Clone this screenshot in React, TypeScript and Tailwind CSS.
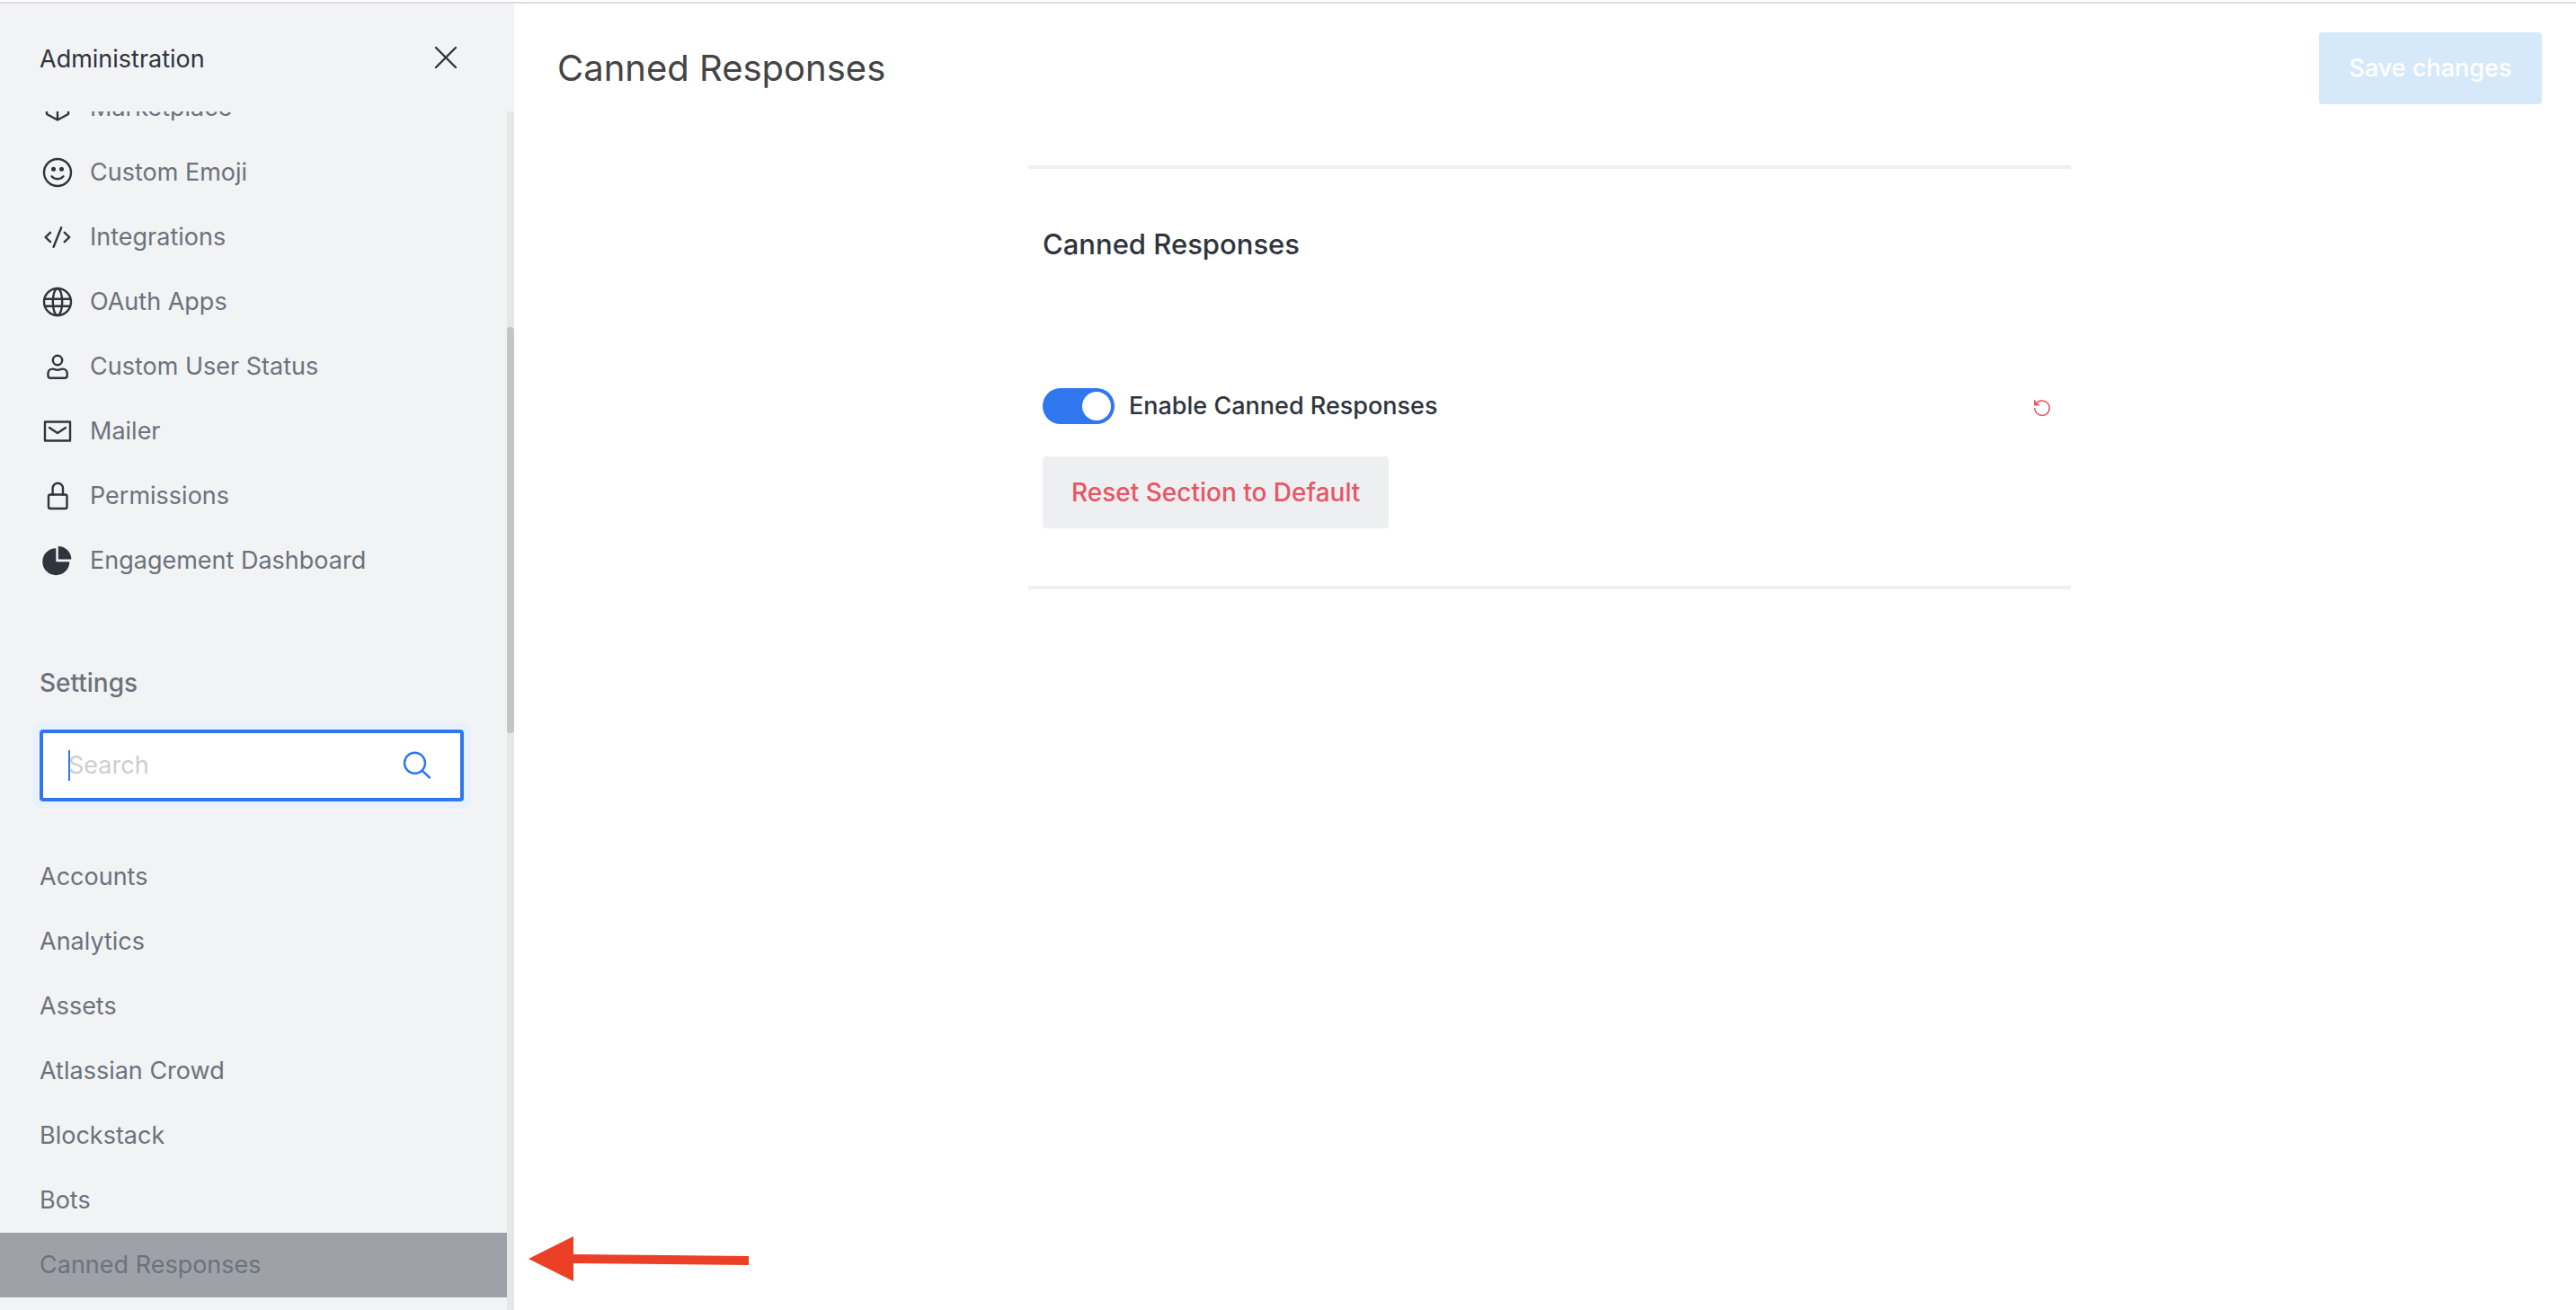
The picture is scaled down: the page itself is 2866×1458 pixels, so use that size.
import type { ReactNode } from "react";

const stroke = {
  fill: "none",
  stroke: "currentColor",
  strokeWidth: 2.4,
  strokeLinecap: "round" as const,
  strokeLinejoin: "round" as const,
};

function Icon({ children }: { children: ReactNode }) {
  return (
    <svg viewBox="0 0 40 40" className="size-10 shrink-0" aria-hidden="true" {...stroke}>
      {children}
    </svg>
  );
}

const adminItems: { label: string; icon: ReactNode }[] = [
  {
    label: "Marketplace",
    icon: <path d="M20 6l12 7v14l-12 6.500-12-6.500V13zM20 20v13M8 13l12 7 12-7" />,
  },
  {
    label: "Custom Emoji",
    icon: (
      <>
        <circle cx="20" cy="20" r="15" />
        <circle cx="15.500" cy="16.300" r="2.500" fill="currentColor" stroke="none" />
        <circle cx="24.500" cy="16.300" r="2.500" fill="currentColor" stroke="none" />
        <path d="M13.500 24.300c1.800 2 4 2.900 6.500 2.900s4.700-.9 6.500-2.900" />
      </>
    ),
  },
  {
    label: "Integrations",
    icon: <path d="M12 14.800L6.600 20l5.400 5.200M27.800 14.800L33.200 20l-5.400 5.200M24.200 9.300l-8.600 21.500" />,
  },
  {
    label: "OAuth Apps",
    icon: (
      <>
        <circle cx="20" cy="20" r="15" />
        <ellipse cx="20" cy="20" rx="5.200" ry="15" />
        <path d="M6 16.800h28M6 24.800h28" />
      </>
    ),
  },
  {
    label: "Custom User Status",
    icon: (
      <>
        <circle cx="20" cy="13" r="5.200" />
        <path d="M14.500 22.600c2 0 3.200 1.200 5.600 1.200s3.600-1.200 5.600-1.200c3 0 5 2.200 5 5V30c0 1.800-1 2.800-2.800 2.800H12.300c-1.800 0-2.800-1-2.800-2.800v-2.400c0-2.800 2-5 5-5z" />
      </>
    ),
  },
  {
    label: "Mailer",
    icon: (
      <>
        <rect x="6" y="9.500" width="28" height="21" />
        <path d="M11 16l9 6 9-6" />
      </>
    ),
  },
  {
    label: "Permissions",
    icon: (
      <>
        <rect x="10" y="18.500" width="20.500" height="15.500" rx="2" />
        <path d="M14.600 18.500v-7a5.700 5.700 0 0 1 11.400 0v7" />
      </>
    ),
  },
  {
    label: "Engagement Dashboard",
    icon: (
      <g fill="currentColor" stroke="none">
        <path d="M18.300 6.200v15h15A15 15 0 1 1 18.300 6.200z" />
        <path d="M20.800 4a14.500 14.500 0 0 1 14.500 14.500H20.800z" />
      </g>
    ),
  },
];

const settings = ["Accounts", "Analytics", "Assets", "Atlassian Crowd", "Blockstack", "Bots", "Canned Responses"];

function Sidebar() {
  return (
    <aside className="flex w-[572px] shrink-0 flex-col bg-[#f2f3f5]">
      <header className="flex h-[120px] shrink-0 items-center justify-between pt-1 pr-14 pl-11 text-[#2f343d]">
        <h2 className="leading-10">Administration</h2>
        <button type="button" aria-label="Close" className="size-10">
          <svg viewBox="0 0 40 40" className="size-10" aria-hidden="true" {...stroke}>
            <path d="M9 7l22 22M31 7L9 29" />
          </svg>
        </button>
      </header>
      <div className="flex min-h-0 flex-1">
        <div className="flex min-w-0 flex-1 flex-col justify-end overflow-hidden pb-[14px] text-[#6c727a]">
          <nav aria-label="Administration">
            {adminItems.map((item) => (
              <a key={item.label} href="#" className="flex h-[72px] items-center gap-4 pl-11">
                <span className="text-[#2f343d]">
                  <Icon>{item.icon}</Icon>
                </span>
                {item.label}
              </a>
            ))}
          </nav>
          <h3 id="settings-heading" className="mt-20 pl-11 text-[28px] leading-10 font-medium">
            Settings
          </h3>
          <div className="mt-8 mr-12 ml-11 flex h-20 shrink-0 items-center rounded-sm border-4 border-[#3076ef] bg-white px-7 ring-8 ring-[#e8f2ff]">
            <span className="-mr-[2px] h-[34px] w-[2px] bg-[#3076ef]" />
            <input
              type="text"
              aria-label="Search settings"
              placeholder="Search"
              className="h-10 min-w-0 flex-1 outline-none placeholder:text-[#cbced1]"
            />
            <svg viewBox="0 0 40 40" className="size-10 text-[#3076ef]" aria-hidden="true" {...stroke}>
              <circle cx="17.500" cy="17.300" r="11.500" />
              <path d="M26 26l8 7.500" />
            </svg>
          </div>
          <nav aria-labelledby="settings-heading" className="mt-12">
            {settings.map((name) => (
              <a
                key={name}
                href="#"
                aria-current={name === "Canned Responses" ? "page" : undefined}
                className="flex h-[72px] items-center pl-11 aria-[current=page]:bg-[#9ea2a8]"
              >
                {name}
              </a>
            ))}
          </nav>
        </div>
        <div className="w-2 shrink-0 bg-[#e6e8e8] pt-60">
          <div className="h-[452px] rounded-full bg-[#c4c6c6]" />
        </div>
      </div>
    </aside>
  );
}

export default function App() {
  return (
    <div className="flex h-screen overflow-hidden border-t-2 border-white bg-white font-['Inter',sans-serif] text-[27px]">
      <div className="relative flex min-w-0 flex-1 border-t-2 border-[#dcdce2]">
        <Sidebar />
        <main className="flex min-w-0 flex-1 flex-col pr-[38px] pl-12 text-[#2f343d]">
          <header className="flex items-center justify-between pt-8">
            <h1 className="text-[40px] leading-[64px] text-[#444]">Canned Responses</h1>
            <button type="button" disabled className="h-20 min-w-[248px] rounded-sm bg-[#d6e9fb] px-8 font-medium text-white">
              Save changes
            </button>
          </header>
          <section className="mx-auto mt-[68px] w-full max-w-[1160px] border-y-4 border-[#eeeff1] px-4 pb-16">
            <h2 className="pt-16 text-[31px] leading-10 font-medium">Canned Responses</h2>
            <div className="mt-[140px] flex items-center justify-between pr-[6px]">
              <label className="flex items-center gap-4 leading-10 font-medium">
                <span className="flex h-10 w-20 items-center rounded-full bg-[#3076ef] px-1 has-[:checked]:justify-end">
                  <input type="checkbox" role="switch" defaultChecked className="size-8 appearance-none rounded-full bg-white" />
                </span>
                Enable Canned Responses
              </label>
              <button type="button" aria-label="Reset setting" className="pt-1 text-[#e85566]">
                <svg viewBox="0 0 20 20" className="size-5" aria-hidden="true" fill="none" stroke="currentColor" strokeWidth="1.500">
                  <path d="M1.800 10a8.200 8.200 0 1 0 2-5.300M1.800 1.200V6.500h5.200" />
                  <path d="M1.800 3v3.500h3.500z" fill="currentColor" />
                </svg>
              </button>
            </div>
            <button type="button" className="mt-9 h-20 rounded-sm bg-[#eeeff1] px-8 text-[28px] font-medium text-[#e85566]">
              Reset Section to Default
            </button>
          </section>
        </main>
        <svg viewBox="0 0 245 50" className="absolute bottom-8 left-[588px] w-[245px] text-[#ec4026]" fill="currentColor" aria-hidden="true">
          <path d="M0 25L50 0v20l195 2v10l-195-2v20z" />
        </svg>
      </div>
    </div>
  );
}
